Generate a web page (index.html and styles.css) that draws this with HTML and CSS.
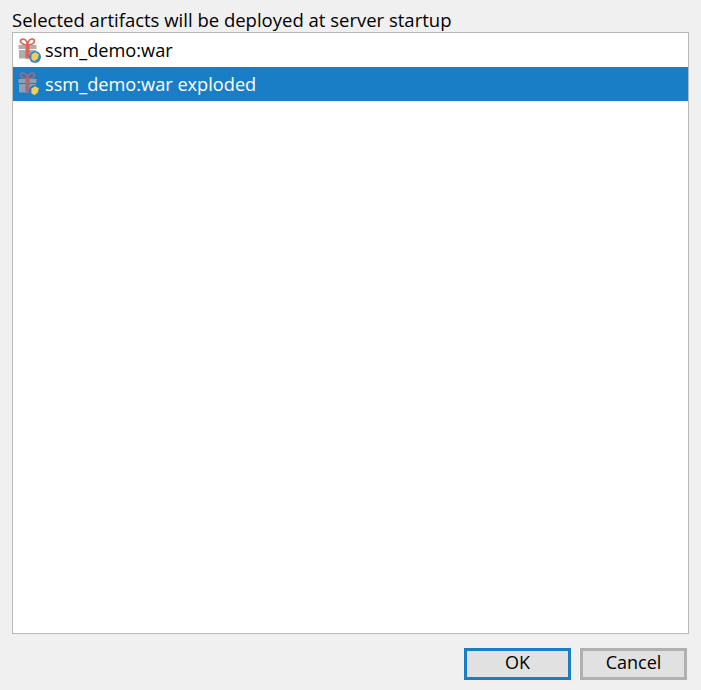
FILE: index.html
```html
<!DOCTYPE html>
<html lang="en">
<head>
    <meta charset="UTF-8">
    <title>Select artifacts</title>
    <link rel="stylesheet" href="styles.css">
</head>
<body>
    <svg class="defs" width="0" height="0">
        <symbol id="gift" viewBox="0 0 20 22">
            <path d="M9.500 7C6.500 7 2.500 5.500 2.500 3C2.500 0.800 5.500 0.500 7 1.700C8.600 3 9.500 5 9.500 7C9.500 5 10.400 3 12 1.700C13.500 0.500 16.500 0.800 16.500 3C16.500 5.500 12.500 7 9.500 7Z" fill="none" stroke="#d8645a" stroke-width="1.700"/>
            <rect x="0.500" y="7" width="18" height="4" fill="#b4acac"/>
            <rect x="1" y="12" width="17" height="8.500" fill="#adadad"/>
            <rect x="7.500" y="7" width="4" height="13.500" fill="#d8645a"/>
        </symbol>
        <symbol id="badge" viewBox="0 0 10 10">
            <circle cx="5" cy="5" r="5" fill="currentColor"/>
            <path d="M5 1L8.200 2.800L7.400 6.300L4.500 8.500L2 6.800L2 3Z" fill="#ecd05a"/>
        </symbol>
    </svg>
    <div class="dialog">
        <div class="caption">Selected artifacts will be deployed at server startup</div>
        <div class="list">
            <div class="row">
                <span class="icon">
                    <svg class="gift"><use href="#gift"/></svg>
                    <svg class="badge"><use href="#badge"/></svg>
                </span>
                <span>ssm_demo:war</span>
            </div>
            <div class="row selected">
                <span class="icon">
                    <svg class="gift"><use href="#gift"/></svg>
                    <svg class="badge"><use href="#badge"/></svg>
                </span>
                <span>ssm_demo:war exploded</span>
            </div>
        </div>
        <div class="buttons">
            <button class="default">OK</button>
            <button>Cancel</button>
        </div>
    </div>
</body>
</html>
```
FILE: styles.css
```css
html, body {
    height: 100%;
}
body {
    margin: 0;
    background: #f0f0f0;
    color: #000;
    font-family: 'Open Sans', 'Noto Sans', sans-serif;
    font-size: 18px;
    overflow: hidden;
}
.defs {
    display: block;
    height: 0;
}
.dialog {
    display: flex;
    flex-direction: column;
    height: 690px;
    box-sizing: border-box;
    padding: 8px 12px 10px 12px;
}
.caption {
    height: 24px;
    font-size: 18.500px;
    line-height: 23px;
    white-space: nowrap;
}
.list {
    height: 602px;
    box-sizing: border-box;
    background: #fff;
    border: 1px solid #b9b9b9;
}
.row {
    display: flex;
    align-items: center;
    gap: 5px;
    height: 34px;
    padding-left: 5px;
    font-size: 18.200px;
    white-space: nowrap;
}
.selected {
    background: #1a7ec6;
    color: #fff;
}
.icon {
    position: relative;
    width: 22px;
    height: 24px;
}
.gift {
    display: block;
    width: 20px;
    height: 22px;
}
.badge {
    position: absolute;
    left: 11px;
    top: 13px;
    width: 12px;
    height: 12px;
    color: #3f86b8;
}
.selected .gift {
    opacity: 0.75;
}
.selected .badge {
    color: #1a7ec6;
}
.buttons {
    display: flex;
    justify-content: flex-end;
    gap: 9px;
    margin-top: 14px;
    padding-right: 2px;
}
button {
    width: 107px;
    height: 32px;
    box-sizing: border-box;
    padding: 0 0 5px 0;
    background: #e1e1e1;
    border: 3px solid #b0b0b0;
    color: #000;
    font-family: inherit;
    font-size: 18px;
    line-height: 22px;
}
.default {
    border-color: #1a7ec6;
}
```
